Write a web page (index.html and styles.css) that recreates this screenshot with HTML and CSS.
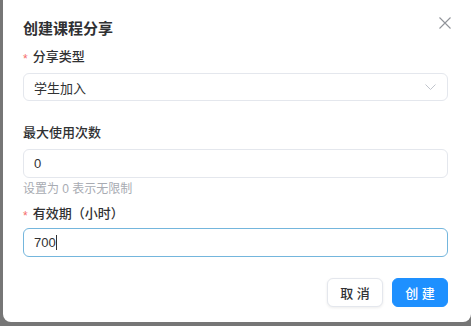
FILE: index.html
```html
<!DOCTYPE html>
<html lang="zh-CN">
<head>
    <meta charset="UTF-8">
    <meta name="viewport" content="width=device-width, initial-scale=1.0">
    <title>创建课程分享</title>
    <link rel="stylesheet" href="styles.css">
</head>
<body>
<div class="dialog">
    <div class="dialog-header">
        <h2>创建课程分享</h2>
        <span class="close">
            <svg width="12" height="12" viewBox="0 0 12 12"><path d="M0.5 0.5L11.5 11.5M11.5 0.5L0.5 11.5" stroke="#909399" stroke-width="1.1" fill="none"/></svg>
        </span>
    </div>

    <div class="form-item">
        <label><span class="req">*</span>分享类型</label>
        <div class="field select">
            <span>学生加入</span>
            <svg width="11" height="6" viewBox="0 0 11 6"><path d="M0.5 0.5L5.5 5.5L10.5 0.5" stroke="#c0c4cc" stroke-width="1" fill="none"/></svg>
        </div>
    </div>

    <div class="form-item gap-top">
        <label>最大使用次数</label>
        <div class="field">0</div>
        <div class="help">设置为 0 表示无限制</div>
    </div>

    <div class="form-item">
        <label class="tight"><span class="req">*</span>有效期（小时）</label>
        <div class="field focused">700<span class="caret"></span></div>
    </div>

    <div class="dialog-footer">
        <button class="btn">取 消</button>
        <button class="btn primary">创 建</button>
    </div>
</div>
</body>
</html>
```

FILE: styles.css
```css
body {
    margin: 0;
    background: #767676;
    font-family: "Liberation Sans", "Noto Sans CJK SC", sans-serif;
    color: #303133;
    height: 326px;
    overflow: hidden;
}
.dialog {
    margin: -8px 0 0 3px;
    width: 425px;
    padding: 23px 23px 15px 20px;
    background: #fff;
    border-radius: 8px;
}
.dialog-header {
    display: flex;
    justify-content: space-between;
    align-items: center;
    height: 24px;
}
.dialog-header h2 {
    margin: 0;
    font-size: 15px;
    font-weight: bold;
    color: #303133;
}
.close {
    display: flex;
    margin-right: -3px;
    margin-top: -8px;
}
.form-item {
    margin-top: 7px;
}
.form-item.gap-top {
    margin-top: 21px;
}
.form-item label {
    display: flex;
    align-items: center;
    font-size: 13px;
    font-weight: 500;
    line-height: 22px;
    color: #303133;
    margin-bottom: 5px;
}
.form-item label.tight {
    margin-bottom: 3px;
}
.req {
    color: #f56c6c;
    font-weight: normal;
    font-size: 12px;
    line-height: 12px;
    height: 8px;
    margin-right: 5px;
}
.field {
    box-sizing: border-box;
    height: 29px;
    border: 1px solid #e4e7ed;
    border-radius: 6px;
    padding: 0 10px;
    display: flex;
    align-items: center;
    font-size: 13px;
    color: #303133;
}
.select {
    justify-content: space-between;
    height: 28px;
}
.select svg {
    margin-right: 1px;
}
.focused {
    border-color: #74b6dd;
}
.caret {
    display: inline-block;
    width: 1px;
    height: 15px;
    background: #303133;
}
.help {
    font-size: 12px;
    line-height: 18px;
    color: #a8abb2;
    margin-top: 2px;
    margin-bottom: -2px;
}
.dialog-footer {
    display: flex;
    justify-content: flex-end;
    gap: 9px;
    margin-top: 21px;
}
.btn {
    width: 56px;
    height: 29px;
    border: 1px solid #e4e7ed;
    border-radius: 6px;
    background: #fff;
    color: #303133;
    font-family: inherit;
    font-size: 13px;
    font-weight: 500;
    box-shadow: 0 1px 3px rgba(0, 0, 0, 0.08);
    padding: 0;
}
.btn.primary {
    background: #1e90ff;
    border-color: #1e90ff;
    color: #fff;
    box-shadow: none;
}
```
